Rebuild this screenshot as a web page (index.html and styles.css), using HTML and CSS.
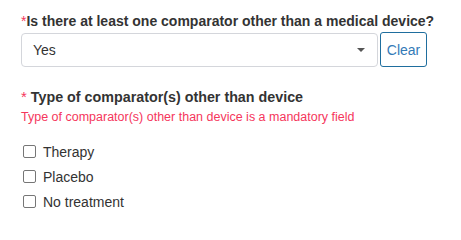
FILE: index.html
```html
<!DOCTYPE html>
<html>
<head>
<meta charset="utf-8">
<link rel="stylesheet" href="styles.css">
</head>
<body>
<div class="form">
  <div class="field">
    <label class="q-label"><span class="req">*</span>Is there at least one comparator other than a medical device?</label>
    <div class="select-row">
      <div class="select">
        <span class="select-value">Yes</span>
        <span class="caret"></span>
      </div>
      <button class="clear-btn">Clear</button>
    </div>
  </div>
  <div class="field field-2">
    <label class="q-label2"><span class="req2">*</span> Type of comparator(s) other than device</label>
    <div class="error">Type of comparator(s) other than device is a mandatory field</div>
    <div class="checks">
      <label class="check"><span class="box"></span>Therapy</label>
      <label class="check"><span class="box"></span>Placebo</label>
      <label class="check"><span class="box"></span>No treatment</label>
    </div>
  </div>
</div>
</body>
</html>
```

FILE: styles.css
```css
html, body {
  margin: 0;
  padding: 0;
  background: #fff;
}
body {
  font-family: "Liberation Sans", Arial, sans-serif;
  color: #333;
}
.form {
  padding: 11px 0 0 21px;
}
.q-label {
  display: block;
  font-size: 14px;
  font-weight: bold;
  line-height: 20px;
  color: #333;
}
.req {
  color: #f5365c;
  font-weight: normal;
}
.select-row {
  display: flex;
  align-items: center;
  margin-top: 1px;
}
.select {
  width: 357px;
  height: 34px;
  box-sizing: border-box;
  border: 1px solid #d4d6db;
  border-radius: 4px;
  display: flex;
  align-items: center;
  justify-content: space-between;
  padding: 0 12px 0 11px;
}
.select-value {
  font-size: 14px;
  color: #333;
}
.caret {
  width: 0;
  height: 0;
  border-left: 4px solid transparent;
  border-right: 4px solid transparent;
  border-top: 4px solid #555;
}
.clear-btn {
  margin-left: 2px;
  height: 35px;
  width: 47px;
  box-sizing: border-box;
  border: 1px solid #1f6e9e;
  border-radius: 3px;
  background: #fff;
  color: #337ab7;
  font-family: "Liberation Sans", Arial, sans-serif;
  font-size: 14px;
  padding: 0;
}
.field-2 {
  margin-top: 20px;
}
.q-label2 {
  display: block;
  font-size: 14.3px;
  font-weight: bold;
  line-height: 20px;
  color: #333;
}
.req2 {
  color: #f5365c;
  font-weight: normal;
  font-size: 15px;
}
.error {
  font-size: 12.5px;
  line-height: 17px;
  color: #f5365c;
  margin-top: 2px;
}
.checks {
  display: flex;
  flex-direction: column;
  margin-top: 13px;
}
.check {
  display: flex;
  align-items: center;
  height: 25px;
  font-size: 14px;
  color: #333;
}
.box {
  width: 11px;
  height: 11px;
  border: 1px solid #767676;
  border-radius: 2px;
  margin: 0 7px 0 2px;
  box-sizing: content-box;
}
```
